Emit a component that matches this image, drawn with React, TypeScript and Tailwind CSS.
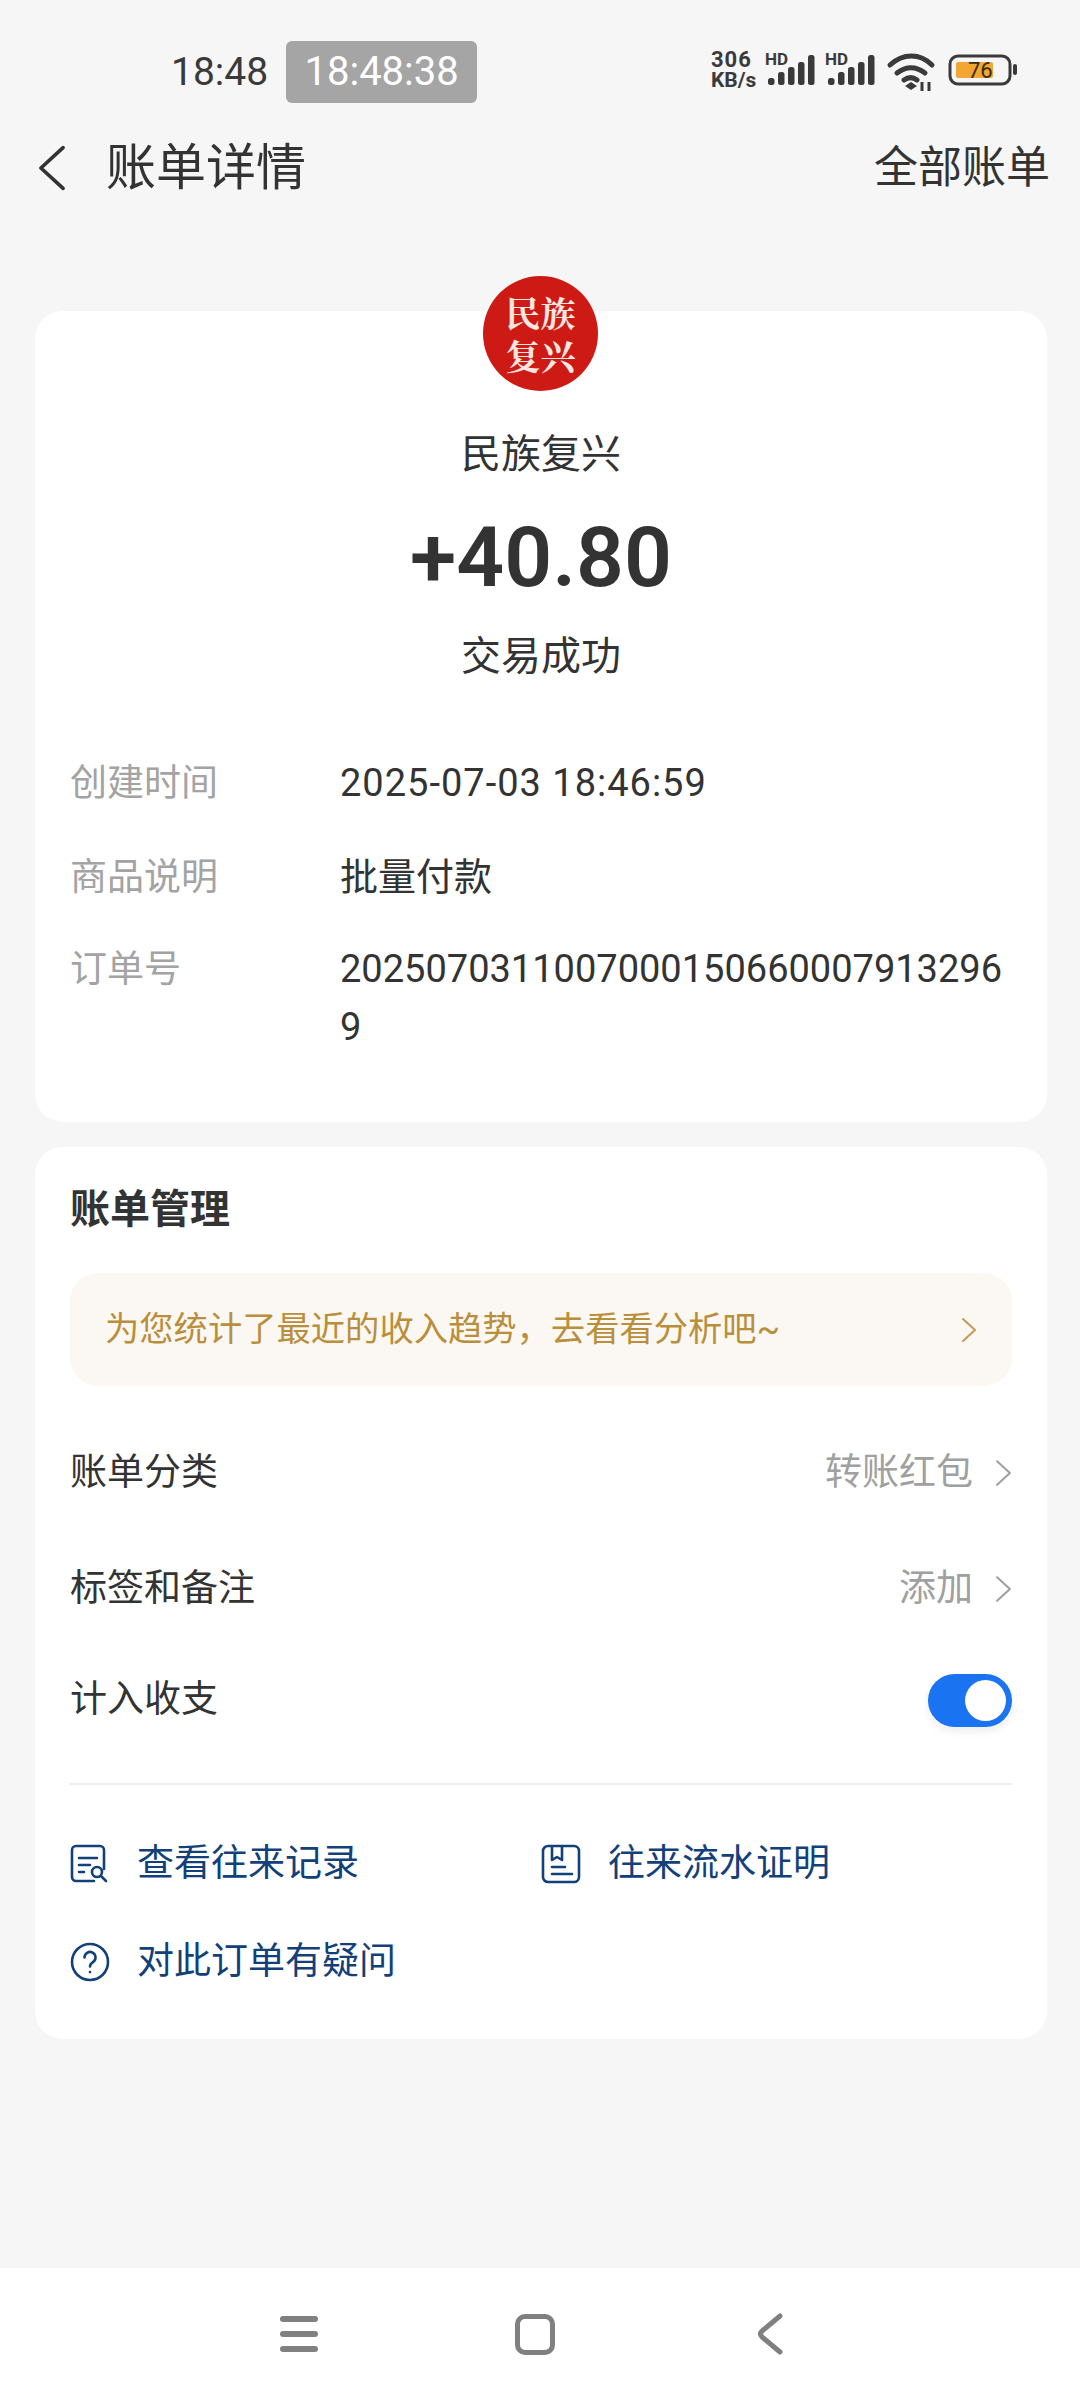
const cjk = { fontFamily: 'Roboto, "Noto Sans CJK SC", sans-serif' };

function Chevron({ className }: { className: string }) {
  return (
    <svg viewBox="0 0 16 26" fill="none" className={className}>
      <path d="M2 2l12 11L2 24" stroke="currentColor" strokeWidth="2" strokeLinecap="round" strokeLinejoin="round" />
    </svg>
  );
}

function Bars({ x }: { x: number }) {
  const heights = [7, 13, 18, 23, 30];
  return (
    <g fill="#3a3a3a">
      {heights.map((h, i) => (
        <rect key={i} x={x + i * 10} y={37 - h} width="6.5" height={h} rx="2.5" />
      ))}
    </g>
  );
}

function StatusIcons() {
  return (
    <svg viewBox="0 0 320 44" className="h-[44px] w-[320px]">
      <text x="11" y="19" fontSize="22" fontWeight="700" letterSpacing="1" fill="#3a3a3a" fontFamily="Roboto">306</text>
      <text x="11" y="39" fontSize="21" fontWeight="700" fill="#3a3a3a" fontFamily="Roboto">KB/s</text>
      <text x="65" y="17" fontSize="17" fontWeight="700" fill="#3a3a3a" fontFamily="Roboto">HD</text>
      <Bars x={68} />
      <text x="125" y="17" fontSize="17" fontWeight="700" fill="#3a3a3a" fontFamily="Roboto">HD</text>
      <Bars x={128} />
      <g fill="none" stroke="#3a3a3a" strokeWidth="5" strokeLinecap="round">
        <path d="M190 17c13-12 30-12 42 0" />
        <path d="M197 25c9-7 19-7 28 0" />
        <path d="M204 32c4-3 9-3 13 0" />
      </g>
      <path d="M205 38l6-4 6 4-6 4z" fill="#3a3a3a" />
      <path d="M222 43v-9M229 34v9" stroke="#3a3a3a" strokeWidth="3" />
      <rect x="250" y="8" width="60" height="28" rx="8" fill="none" stroke="#3a3a3a" strokeWidth="3" />
      <rect x="256" y="14" width="37" height="16" rx="2" fill="#f2a633" />
      <text x="268" y="30" fontSize="22" fill="#3a2a10" fontFamily="Roboto">76</text>
      <rect x="313" y="16" width="4" height="11" rx="2" fill="#3a3a3a" />
    </svg>
  );
}

function InfoRow({ label, value, valueClass = "" }: { label: string; value: string; valueClass?: string }) {
  return (
    <div className="flex leading-[58px]">
      <div className="mt-[1px] w-[270px] shrink-0 text-[37px] text-[#a3a3a3]">{label}</div>
      <div className={`w-[670px] break-all text-[38px] text-[#333333] ${valueClass}`}>{value}</div>
    </div>
  );
}

function LinkItem({ icon, label }: { icon: React.ReactNode; label: string }) {
  return (
    <div className="flex items-center gap-[27px] text-[37px] leading-[50px] text-[#12407a]">
      {icon}
      <span>{label}</span>
    </div>
  );
}

export default function App() {
  return (
    <div className="flex h-[2400px] w-[1080px] flex-col bg-[#f6f6f6] text-[#333333]" style={cjk}>
      {/* status bar */}
      <div className="flex h-[104px] items-end justify-between pb-[1px] pl-[171px] pr-[60px]">
        <div className="flex items-center gap-[18px]">
          <span className="text-[39px] leading-[62px] text-[#3a3a3a]">18:48</span>
          <span className="flex h-[62px] w-[191px] items-center justify-center rounded-[6px] bg-[#a5a5a5] text-[40px] text-white">18:48:38</span>
        </div>
        <div className="mb-[11px]"><StatusIcons /></div>
      </div>

      {/* title */}
      <div className="mt-[22px] flex h-[84px] items-center justify-between pl-[37px] pr-[30px]">
        <div className="flex items-center gap-[39px]">
          <Chevron className="h-[48px] w-[30px] -scale-x-100 text-[#333333]" />
          <span className="text-[50px]">账单详情</span>
        </div>
        <span className="text-[44px]">全部账单</span>
      </div>

      {/* summary card */}
      <div className="relative ml-[35px] mr-[33px] mt-[101px] h-[811px] rounded-[28px] bg-white px-[35px]">
        <div className="absolute left-[448px] top-[-35px] flex h-[115px] w-[115px] items-center justify-center rounded-full bg-[#cd1a14] text-center text-[35px] font-bold leading-[43px] text-[#fbe6e0]" style={{ fontFamily: '"Noto Serif CJK SC", "Noto Sans CJK SC", serif' }}>
          <span>民族<br />复兴</span>
        </div>
        <div className="flex flex-col items-center pt-[114px]">
          <div className="text-[40px] leading-[60px]">民族复兴</div>
          <div className="mt-[23px] text-[84px] font-semibold leading-[100px]">+40.80</div>
          <div className="mt-[19px] text-[40px] leading-[60px]">交易成功</div>
        </div>
        <div className="mt-[67px] flex flex-col gap-[35px]">
          <InfoRow label="创建时间" value="2025-07-03 18:46:59" valueClass="tracking-[1px]" />
          <InfoRow label="商品说明" value="批量付款" />
          <div className="mt-[-2px]">
            <InfoRow label="订单号" value="20250703110070001506600079132969" />
          </div>
        </div>
      </div>

      {/* manage card */}
      <div className="ml-[35px] mr-[33px] mt-[25px] h-[892px] rounded-[28px] bg-white px-[35px]">
        <div className="pt-[38px] text-[40px] font-bold leading-[50px]">账单管理</div>
        <div className="mt-[38px] flex h-[113px] items-center justify-between rounded-[28px] bg-[#fbf7f2] pl-[35px] pr-[35px] text-[34.3px] text-[#b98f3c]">
          <span>为您统计了最近的收入趋势，去看看分析吧~</span>
          <Chevron className="h-[26px] w-[16px] text-[#c49a55]" />
        </div>
        <div className="mt-[52px] flex h-[70px] items-center justify-between text-[37px]">
          <span>账单分类</span>
          <span className="flex items-center gap-[22px] text-[#a0a0a0]">转账红包<Chevron className="h-[28px] w-[17px]" /></span>
        </div>
        <div className="mt-[46px] flex h-[70px] items-center justify-between text-[37px]">
          <span>标签和备注</span>
          <span className="flex items-center gap-[22px] text-[#a0a0a0]">添加<Chevron className="h-[28px] w-[17px]" /></span>
        </div>
        <div className="mt-[41px] flex h-[70px] items-center justify-between text-[37px]">
          <span>计入收支</span>
          <div className="flex h-[53px] w-[84px] items-center justify-end rounded-full bg-[#1a73f0] pr-[6px] shadow-[0_4px_10px_rgba(0,0,0,0.08)]">
            <div className="h-[41px] w-[41px] rounded-full bg-white" />
          </div>
        </div>
        <div className="mt-[48px] h-[2px] bg-[#eeeeee]" />
        <div className="mt-[54px] grid grid-cols-[471px_1fr] gap-y-[48px]">
          <LinkItem
            label="查看往来记录"
            icon={
              <svg viewBox="0 0 40 40" fill="none" stroke="currentColor" strokeWidth="2.6" strokeLinecap="round" className="h-[40px] w-[40px]">
                <path d="M24 37H6a4 4 0 0 1-4-4V6a4 4 0 0 1 4-4h24a4 4 0 0 1 4 4v19" />
                <path d="M9 14h18M9 21h11M9 28h5" />
                <circle cx="27" cy="28" r="5" />
                <path d="M31 32l5 5" />
              </svg>
            }
          />
          <LinkItem
            label="往来流水证明"
            icon={
              <svg viewBox="0 0 40 40" fill="none" stroke="currentColor" strokeWidth="2.6" strokeLinecap="round" strokeLinejoin="round" className="h-[40px] w-[40px]">
                <rect x="2" y="2" width="36" height="36" rx="5" />
                <path d="M11 3v13l5-3 5 3V3" />
                <path d="M11 23h13M11 30h20" />
              </svg>
            }
          />
          <LinkItem
            label="对此订单有疑问"
            icon={
              <svg viewBox="0 0 40 40" fill="none" stroke="currentColor" strokeWidth="2.6" strokeLinecap="round" className="h-[40px] w-[40px]">
                <circle cx="20" cy="20" r="18" />
                <path d="M14.5 15.5a5.5 5.5 0 1 1 8.5 4.6c-2 1.3-3 2.4-3 4.4" />
                <path d="M20 30v.1" />
              </svg>
            }
          />
        </div>
      </div>

      {/* nav bar */}
      <div className="mt-auto flex h-[132px] items-center bg-white pl-[280px]">
        <svg viewBox="0 0 38 36" className="h-[36px] w-[38px]" fill="#808080">
          <rect y="0" width="38" height="6" rx="3" />
          <rect y="15" width="38" height="6" rx="3" />
          <rect y="30" width="38" height="6" rx="3" />
        </svg>
        <div className="ml-[197px] h-[41px] w-[40px] rounded-[10px] border-[5px] border-[#808080]" />
        <svg viewBox="0 0 26 42" fill="none" className="ml-[202px] h-[42px] w-[26px]">
          <path d="M23 3L5 18q-3 3 0 6l18 15" stroke="#808080" strokeWidth="5" strokeLinecap="round" />
        </svg>
      </div>
    </div>
  );
}
